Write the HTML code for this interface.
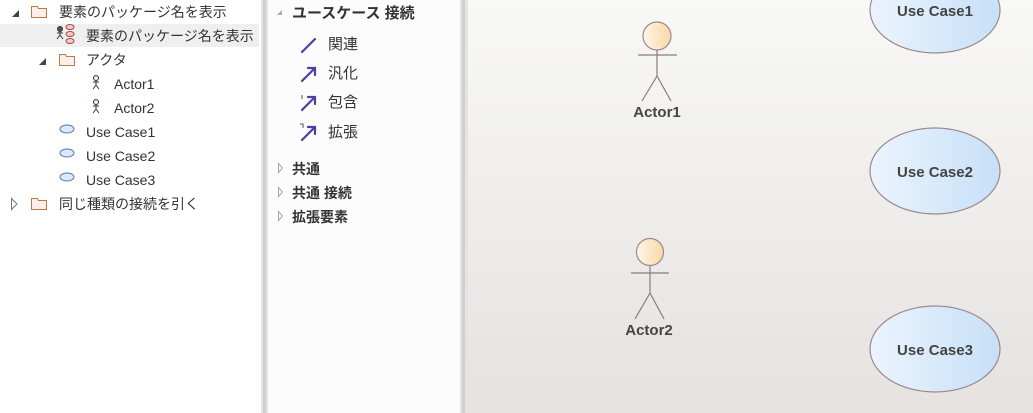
<!DOCTYPE html>
<html><head><meta charset="utf-8"><style>
body{margin:0;width:1033px;height:413px;overflow:hidden;background:#fff;font-family:"Liberation Sans","Noto Sans CJK JP",sans-serif;position:relative}
.a{position:absolute;white-space:nowrap}
.t{font-size:14px;color:#333;line-height:24px}
.sel{position:absolute;left:0;top:24px;width:259px;height:23px;background:#efefef}
.b{font-weight:bold;font-size:14px;color:#333}
</style></head><body>
<div class="sel"></div>
<svg class="a" style="left:0;top:0" width="260" height="220">
<polygon points="12,17 19,17 19,10" fill="#444"/>
<polygon points="39,65 46,65 46,58" fill="#444"/>
<polygon points="11.5,198.5 11.5,209.5 17,204" fill="#fff" stroke="#777"/>
<g fill="#fdeee9" stroke="#b77f45">
<path d="M31.5,6.5h6l1,2h8v9h-15z"/><path d="M59.5,54.5h6l1,2h8v9h-15z"/><path d="M31.5,198.5h6l1,2h8v9h-15z"/>
</g>
<g fill="#dde9f8" stroke="#4a75b0"><ellipse cx="67" cy="129" rx="7" ry="4"/><ellipse cx="67" cy="153" rx="7" ry="4"/><ellipse cx="67" cy="177" rx="7" ry="4"/></g>
<g stroke="#333" fill="#fbe9d0"><circle cx="96" cy="78" r="2.5"/><path d="M93,82h6M96,80v5l-3,4M96,85l3,4" fill="none"/>
<circle cx="96" cy="102" r="2.5"/><path d="M93,106h6M96,104v5l-3,4M96,109l3,4" fill="none"/>
<circle cx="60" cy="29" r="2.5" fill="#555"/><path d="M57,33h6M60,31v4l-3,4M60,35l3,4" fill="none"/></g>
<g fill="#f3c9cc" stroke="#a44"><ellipse cx="70" cy="27" rx="4" ry="2.5"/><ellipse cx="70" cy="34" rx="4" ry="2.5"/><ellipse cx="70" cy="41" rx="4" ry="2.5"/></g>
</svg>
<div class="a t" style="left:59px;top:0">要素のパッケージ名を表示</div>
<div class="a t" style="left:86px;top:24px">要素のパッケージ名を表示</div>
<div class="a t" style="left:86px;top:48px">アクタ</div>
<div class="a t" style="left:114px;top:72px">Actor1</div>
<div class="a t" style="left:114px;top:96px">Actor2</div>
<div class="a t" style="left:86px;top:120px">Use Case1</div>
<div class="a t" style="left:86px;top:144px">Use Case2</div>
<div class="a t" style="left:86px;top:168px">Use Case3</div>
<div class="a t" style="left:59px;top:192px">同じ種類の接続を引く</div>
<div class="a" style="left:261px;top:0;width:2px;height:413px;background:#e4e4e4"></div>
<div class="a" style="left:263px;top:0;width:3px;height:413px;background:#cfcfcf"></div>
<div class="a" style="left:266px;top:0;width:2px;height:413px;background:#e4e4e4"></div>
<div class="a" style="left:268px;top:0;width:192px;height:413px;background:#fcfcfc"></div>
<svg class="a" style="left:268px;top:0" width="192" height="230">
<polygon points="9,15 14,15 14,10" fill="#aaa"/>
<g fill="#fff" stroke="#aaa"><polygon points="10.5,163.5 10.5,172.5 14.5,168"/><polygon points="10.5,187.5 10.5,196.5 14.5,192"/><polygon points="10.5,211.5 10.5,220.5 14.5,216"/></g>
<g stroke="#4b3fa0" stroke-width="2.2" fill="none" stroke-linecap="round">
<path d="M34,52L47,39"/><path d="M34,81L47,68M40,68h7v7"/><path d="M34,110L47,97M40,97h7v7"/><path d="M34,140L47,127M40,127h7v7"/></g>
<path d="M34,95v4M32,124h3v4" stroke="#555" fill="none"/>
</svg>
<div class="a b" style="left:292px;top:2px;font-size:15px">ユースケース 接続</div>
<div class="a t" style="left:328px;top:33px;font-size:15px">関連</div>
<div class="a t" style="left:328px;top:62px;font-size:15px">汎化</div>
<div class="a t" style="left:328px;top:91px;font-size:15px">包含</div>
<div class="a t" style="left:328px;top:121px;font-size:15px">拡張</div>
<div class="a b" style="left:292px;top:159px">共通</div>
<div class="a b" style="left:292px;top:183px">共通 接続</div>
<div class="a b" style="left:292px;top:207px">拡張要素</div>
<div class="a" style="left:460px;top:0;width:2px;height:413px;background:#e4e4e4"></div>
<div class="a" style="left:462px;top:0;width:3px;height:413px;background:#cfcfcf"></div>
<div class="a" style="left:465px;top:0;width:3px;height:413px;background:#e4e4e4"></div>
<svg class="a" style="left:468px;top:0" width="565" height="413">
<defs><linearGradient id="bg" x1="0" y1="0" x2="0" y2="1"><stop offset="0" stop-color="#f8f8f6"/><stop offset="1" stop-color="#e5e2e0"/></linearGradient>
<linearGradient id="uc" x1="0" y1="0" x2="1" y2="0"><stop offset="0" stop-color="#ebf4fd"/><stop offset="1" stop-color="#c7e0f8"/></linearGradient>
<linearGradient id="hd" x1="0" y1="0" x2="1" y2="0"><stop offset="0" stop-color="#fff6e6"/><stop offset="1" stop-color="#f9d7a8"/></linearGradient></defs>
<rect width="565" height="413" fill="url(#bg)"/>
<g fill="url(#uc)" stroke="#9b8a8a" stroke-width="1.2"><ellipse cx="467" cy="10" rx="65" ry="43"/><ellipse cx="467" cy="171" rx="65" ry="43"/><ellipse cx="467" cy="349" rx="65" ry="43"/></g>
<g fill="url(#hd)" stroke="#9b8a8a" stroke-width="1.2"><circle cx="189" cy="36" r="14"/><circle cx="182" cy="252" r="13.5"/></g>
<g stroke="#8e7a78" stroke-width="1.2" fill="none"><path d="M170,55h39M189,50v26l-15,25M189,76l14,25"/><path d="M163,273h38M182,266v27l-15,26M182,293l14,26"/></g>
<g font-family="Liberation Sans,sans-serif" font-weight="bold" font-size="15" fill="#444" text-anchor="middle">
<text x="467" y="16">Use Case1</text><text x="467" y="177">Use Case2</text><text x="467" y="355">Use Case3</text>
<text x="189" y="117">Actor1</text><text x="181" y="335">Actor2</text></g>
</svg>
</body></html>
